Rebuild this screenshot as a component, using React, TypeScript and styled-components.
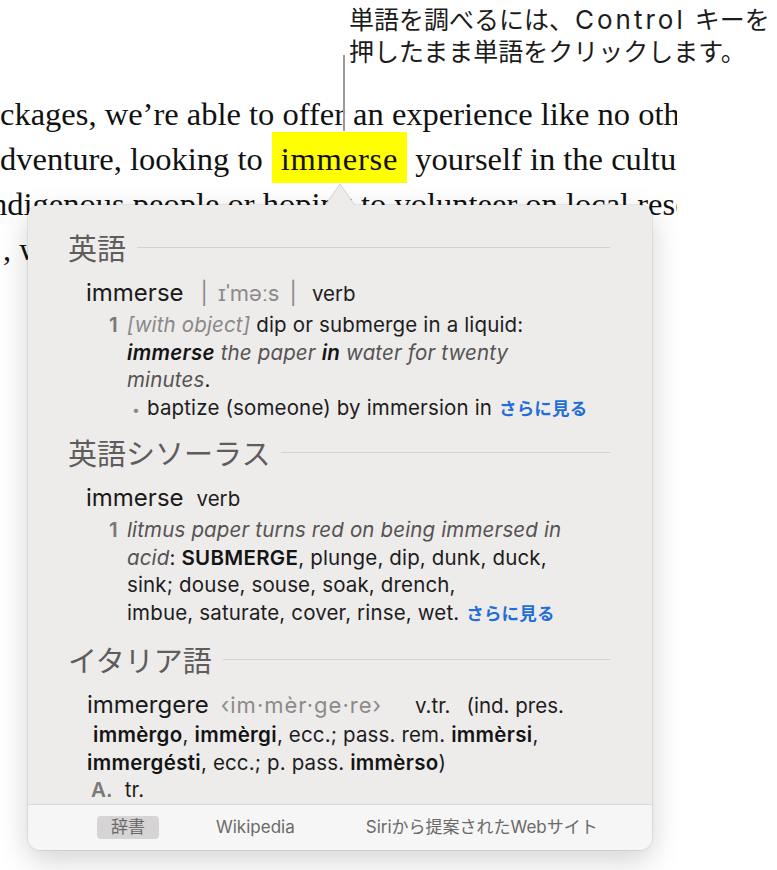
import React from 'react';
import styled, { createGlobalStyle } from 'styled-components';

const SANS = `Inter, "Noto Sans CJK JP", sans-serif`;
const CJK = `"Noto Sans CJK JP", Inter, sans-serif`;
const SERIF = `"Liberation Serif", "Times New Roman", serif`;

const GlobalStyle = createGlobalStyle`
  html, body {
    margin: 0;
    padding: 0;
    background: #ffffff;
  }
  body {
    font-family: ${SANS};
  }
`;

const Stage = styled.div`
  position: relative;
  width: 777px;
  height: 870px;
  overflow: hidden;
  background: #ffffff;
`;

const Callout = styled.div`
  padding: 4px 0 0 349px;
  font-family: ${SANS};
  font-size: 25px;
  line-height: 32px;
  color: #1c1c1c;
  white-space: nowrap;
`;

const Latin = styled.span`
  font-size: 26px;
  letter-spacing: 3px;
  margin: 0 9px 0 1px;
`;

const Leader = styled.div`
  position: absolute;
  left: 343px;
  top: 55px;
  width: 2px;
  height: 76px;
  background: #9a9a9a;
`;

const Doc = styled.div`
  width: 677px;
  overflow: hidden;
  margin-top: 24px;
  font-family: ${SERIF};
  font-size: 32.5px;
  line-height: 45px;
  color: #111111;
`;

const DocLine = styled.div<{ $shift?: number }>`
  white-space: nowrap;
  margin-left: ${(p) => p.$shift ?? 0}px;
`;

const Highlight = styled.span`
  background: #ffff00;
  padding: 9px 9px 6px 9px;
  margin-left: 9px;
  letter-spacing: 0.8px;
`;

const Popover = styled.div`
  position: absolute;
  left: 28px;
  top: 205px;
  width: 624px;
  height: 645px;
  display: flex;
  flex-direction: column;
  background: #eeebeb;
  border-radius: 12px;
  box-shadow: 0 0 0 1px rgba(0, 0, 0, 0.07), 0 10px 30px rgba(0, 0, 0, 0.18);
`;

const Arrow = styled.svg`
  position: absolute;
  left: 297px;
  top: -22px;
`;

const Body = styled.div`
  flex: 1;
  overflow: hidden;
  padding: 24px 42px 0 40px;
  font-family: ${SANS};
  color: #1d1d1d;
`;

const SectionHead = styled.div<{ $gap?: number }>`
  display: flex;
  align-items: center;
  gap: 11px;
  margin-top: ${(p) => p.$gap ?? 0}px;
  font-family: ${CJK};
  font-size: 29px;
  line-height: 36px;
  color: #5e5c5c;
  &::after {
    content: '';
    flex: 1;
    height: 1px;
    background: #d3d0d0;
  }
`;

const HeadRow = styled.div<{ $indent?: number }>`
  margin-top: 13px;
  padding-left: ${(p) => p.$indent ?? 18}px;
  font-size: 20.5px;
  line-height: 30px;
  white-space: nowrap;
`;

const Headword = styled.span<{ $gap?: number }>`
  font-size: 24px;
  color: #1a1a1a;
  margin-right: ${(p) => p.$gap ?? 14}px;
`;

const Phon = styled.span<{ $gap?: number; $track?: number }>`
  font-size: 22px;
  color: #8c8a8a;
  margin-right: ${(p) => p.$gap ?? 15}px;
  letter-spacing: ${(p) => p.$track ?? 0}px;
  word-spacing: 4px;
`;

const Pos = styled.span<{ $gap?: number }>`
  margin-right: ${(p) => p.$gap ?? 0}px;
`;

const Line = styled.div<{ $indent?: number }>`
  padding-left: ${(p) => p.$indent ?? 59}px;
  font-size: 20.5px;
  letter-spacing: 0.15px;
  line-height: 27.5px;
  white-space: nowrap;
`;

const SenseRow = styled.div`
  display: flex;
  padding-left: 41px;
  font-size: 20.5px;
  letter-spacing: 0.15px;
  line-height: 27.5px;
  white-space: nowrap;
  margin-top: 2px;
`;

const Num = styled.span`
  width: 18px;
  color: #7a7878;
  font-weight: 600;
`;

const Label = styled.span`
  color: #8a8888;
  font-style: italic;
`;

const Ex = styled.span`
  color: #555353;
  font-style: italic;
`;

const B = styled.span`
  font-weight: 600;
  color: #141414;
  letter-spacing: 0.3px;
`;

const Bullet = styled.span`
  display: inline-block;
  width: 15px;
  color: #8a8888;
  font-size: 14px;
`;

const More = styled.span`
  font-family: ${CJK};
  color: #1f6fd6;
  font-weight: 700;
  font-size: 17.5px;
  margin-left: 7px;
`;

const Mark = styled.span`
  color: #7a7878;
  font-weight: 600;
  margin-right: 12px;
`;

const TabBar = styled.div`
  height: 45px;
  display: flex;
  align-items: center;
  gap: 43px;
  padding-left: 69px;
  border-top: 1px solid #dcd9d9;
  background: #f6f6f6;
  border-radius: 0 0 12px 12px;
`;

const Tab = styled.div<{ $active?: boolean }>`
  height: 23px;
  line-height: 23px;
  padding: 0 14px;
  border-radius: 4px;
  font-family: ${SANS};
  font-size: 17px;
  color: #6b6969;
  background: ${(p) => (p.$active ? '#d6d4d4' : 'transparent')};
`;

export default function App() {
  return (
    <Stage>
      <GlobalStyle />
      <Callout>
        <div>
          単語を調べるには、<Latin>Control</Latin>キーを
        </div>
        <div>押したまま単語をクリックします。</div>
      </Callout>
      <Leader />
      <Doc>
        <DocLine>ckages, we’re able to offer an experience like no other travel</DocLine>
        <DocLine>
          dventure, looking to<Highlight>immerse</Highlight> yourself in the culture of
        </DocLine>
        <DocLine $shift={-9}>ndigenous people or hoping to volunteer on local reserves</DocLine>
        <DocLine $shift={3}>, we can help you plan it all.</DocLine>
      </Doc>

      <Popover>
        <Arrow width="30" height="23" viewBox="0 0 30 23">
          <path d="M0 23 L15 1 L30 23 Z" fill="#eeebeb" />
          <path d="M0 22.5 L15 1 L30 22.5" fill="none" stroke="#d2cfcf" strokeWidth="1" />
        </Arrow>
        <Body>
          <SectionHead>英語</SectionHead>
          <HeadRow>
            <Headword $gap={17}>immerse</Headword>
            <Phon>| ɪˈməːs |</Phon>
            verb
          </HeadRow>
          <SenseRow>
            <Num>1</Num>
            <span>
              <Label>[with object]</Label> dip or submerge in a liquid:
            </span>
          </SenseRow>
          <Line>
            <B>
              <i>immerse</i>
            </B>
            <Ex> the paper </Ex>
            <B>
              <i>in</i>
            </B>
            <Ex> water for twenty</Ex>
          </Line>
          <Line>
            <Ex>minutes</Ex>.
          </Line>
          <Line $indent={64}>
            <Bullet>•</Bullet>baptize (someone) by immersion in<More>さらに見る</More>
          </Line>

          <SectionHead $gap={11}>英語シソーラス</SectionHead>
          <HeadRow>
            <Headword $gap={13}>immerse</Headword>
            verb
          </HeadRow>
          <SenseRow>
            <Num>1</Num>
            <Ex>litmus paper turns red on being immersed in</Ex>
          </SenseRow>
          <Line>
            <Ex>acid</Ex>: <B>SUBMERGE</B>, plunge, dip, dunk, duck,
          </Line>
          <Line>sink; douse, souse, soak, drench,</Line>
          <Line>
            imbue, saturate, cover, rinse, wet.<More>さらに見る</More>
          </Line>

          <SectionHead $gap={15}>イタリア語</SectionHead>
          <HeadRow $indent={19}>
            <Headword $gap={12}>immergere</Headword>
            <Phon $gap={33} $track={1}>
              ‹im·mèr·ge·re›
            </Phon>
            <Pos $gap={16}>v.tr.</Pos>
            (ind. pres.
          </HeadRow>
          <Line $indent={25}>
            <B>immèrgo</B>, <B>immèrgi</B>, ecc.; pass. rem. <B>immèrsi</B>,
          </Line>
          <Line $indent={19}>
            <B>immergésti</B>, ecc.; p. pass. <B>immèrso</B>)
          </Line>
          <Line $indent={23}>
            <Mark>A.</Mark>tr.
          </Line>
        </Body>
        <TabBar>
          <Tab $active>辞書</Tab>
          <Tab>Wikipedia</Tab>
          <Tab>Siriから提案されたWebサイト</Tab>
        </TabBar>
      </Popover>
    </Stage>
  );
}
